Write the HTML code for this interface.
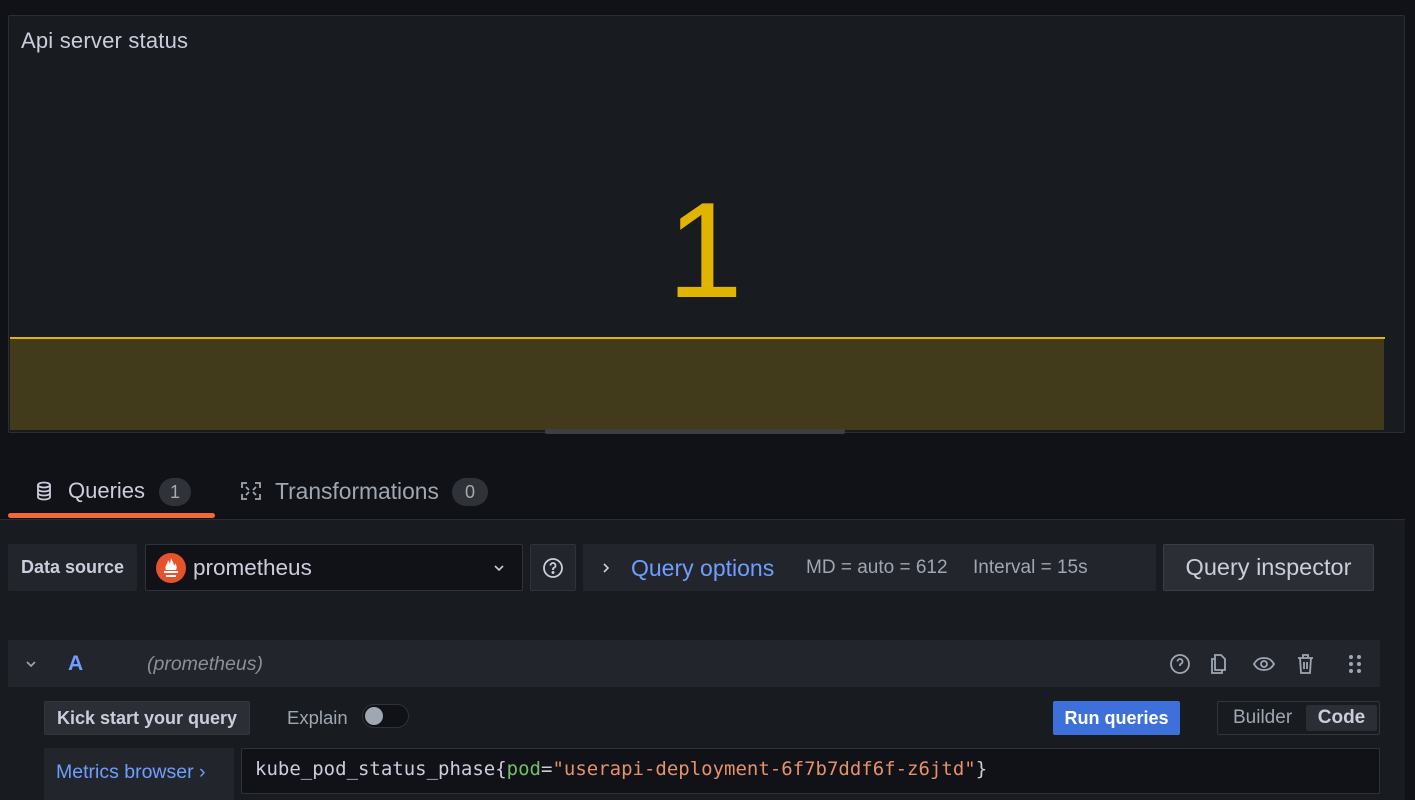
<!DOCTYPE html>
<html><head><style>
*{box-sizing:border-box;margin:0;padding:0}
body{width:1415px;height:800px;overflow:hidden;background:#111217;font-family:"Liberation Sans",sans-serif;color:#ccccdc;position:relative}
.a{position:absolute}
.btn{position:absolute;display:flex;align-items:center;justify-content:center;border-radius:2px}
</style></head><body>
<div class="a" style="left:8px;top:15px;width:1397px;height:418px;background:#181b1f;border:1px solid #2a2d33;border-radius:2px"></div>
<div class="a" style="left:21px;top:28px;font-size:22px;color:#ccccdc;letter-spacing:0.2px">Api server status</div>
<div class="a" style="left:655px;top:180px;width:100px;text-align:center;font-size:136px;color:#e0b400;line-height:140px">1</div>
<div class="a" style="left:10px;top:339px;width:1374px;height:91px;background:#413a1b"></div>
<div class="a" style="left:10px;top:337px;width:1375px;height:2px;background:#e0b400"></div>
<div class="a" style="left:545px;top:429px;width:300px;height:5px;background:#3d3f45;border-radius:2px"></div>

<div class="a" style="left:0;top:519px;width:1405px;height:281px;background:#181b1f;border-top:1px solid #2a2d33"></div>
<svg class="a" style="left:35px;top:481px" width="18" height="20" viewBox="0 0 18 20" fill="none" stroke="#ccccdc" stroke-width="1.8"><ellipse cx="9" cy="4" rx="6" ry="2.5"/><path d="M3 4v12c0 1.4 2.7 2.5 6 2.5s6-1.1 6-2.5V4M3 8c0 1.4 2.7 2.5 6 2.5S15 9.4 15 8M3 12c0 1.4 2.7 2.5 6 2.5s6-1.1 6-2.5"/></svg>
<div class="a" style="left:68px;top:478px;font-size:22px;color:#ccccdc">Queries</div>
<div class="a" style="left:159px;top:478px;width:32px;height:28px;border-radius:14px;background:#2f3238;font-size:18px;text-align:center;line-height:28px;color:#aaa">1</div>
<div class="a" style="left:8px;top:513px;width:207px;height:5px;background:#f06a36;border-radius:3px"></div>
<svg class="a" style="left:240px;top:481px" width="22" height="20" viewBox="0 0 22 20" fill="none" stroke="#9fa7b3" stroke-width="1.8"><path d="M2 7V2h5M20 7V2h-5M2 13v5h5M20 13v5h-5M6 6l3 3M16 6l-3 3M6 14l3-3M16 14l-3-3"/></svg>
<div class="a" style="left:275px;top:478px;font-size:22.8px;color:#9fa7b3">Transformations</div>
<div class="a" style="left:452px;top:478px;width:36px;height:28px;border-radius:14px;background:#2f3238;font-size:18px;text-align:center;line-height:28px;color:#aaa">0</div>

<div class="btn" style="left:8px;top:544px;width:129px;height:47px;background:#22252b;font-size:18px;font-weight:bold;color:#ccccdc">Data source</div>
<div class="a" style="left:145px;top:544px;width:378px;height:47px;background:#111217;border:1px solid #2f3238;border-radius:2px"></div>
<svg class="a" style="left:156px;top:553px" width="30" height="30" viewBox="0 0 30 30"><circle cx="15" cy="15" r="15" fill="#e6522c"/><path d="M8 18h14v2H8zM10 22h10v2H10zM10 17c-2-4 2-6 2-10 1 2 2 3 2 5 0-3 1-5 1-7 1 3 3 5 3 8 1-1 1-2 1-3 2 3 2 5 1 7z" fill="#fff"/></svg>
<div class="a" style="left:193px;top:555px;font-size:22.5px;color:#ccccdc">prometheus</div>
<svg class="a" style="left:493px;top:563px" width="12" height="10" viewBox="0 0 12 10" fill="none" stroke="#ccccdc" stroke-width="1.6"><path d="M2 3l4 4 4-4"/></svg>
<div class="btn" style="left:530px;top:544px;width:46px;height:47px;background:#22252b;border:1px solid #2f3238"><svg width="22" height="22" viewBox="0 0 22 22" fill="none" stroke="#ccccdc" stroke-width="1.8"><circle cx="11" cy="11" r="9"/><path d="M8.5 8.5a2.5 2.5 0 1 1 3.5 2.3c-.7.3-1 .8-1 1.5v.7"/><circle cx="11" cy="15.5" r=".6" fill="#ccccdc"/></svg></div>
<div class="a" style="left:583px;top:544px;width:573px;height:47px;background:#22252b"></div>
<svg class="a" style="left:601px;top:562px" width="10" height="12" viewBox="0 0 10 12" fill="none" stroke="#ccccdc" stroke-width="1.6"><path d="M3 2l4 4-4 4"/></svg>
<div class="a" style="left:631px;top:555px;font-size:23px;color:#6e9fff">Query options</div>
<div class="a" style="left:806px;top:557px;font-size:19px;color:#9fa7b3">MD = auto = 612</div>
<div class="a" style="left:973px;top:557px;font-size:19px;color:#9fa7b3">Interval = 15s</div>
<div class="btn" style="left:1163px;top:544px;width:211px;height:47px;background:#2b2e34;border:1px solid #3a3d43;font-size:23.5px;color:#ccccdc">Query inspector</div>

<div class="a" style="left:8px;top:640px;width:1372px;height:47px;background:#22252b"></div>
<svg class="a" style="left:25px;top:659px" width="12" height="10" viewBox="0 0 12 10" fill="none" stroke="#9fa7b3" stroke-width="1.6"><path d="M2 3l4 4 4-4"/></svg>
<div class="a" style="left:68px;top:652px;font-size:21px;color:#6e9fff;font-weight:bold">A</div>
<div class="a" style="left:147px;top:653px;font-size:19.5px;color:#8e8e99;font-style:italic">(prometheus)</div>
<svg class="a" style="left:1168px;top:653px" width="196" height="22" viewBox="0 0 196 22" fill="none" stroke="#9fa7b3" stroke-width="1.8"><circle cx="12" cy="11" r="9"/><path d="M9.5 8.5a2.5 2.5 0 1 1 3.5 2.3c-.7.3-1 .8-1 1.5v.7"/><path d="M47 6h-3v14h10v-3M47 2h6l4 4v11H47z"/><path d="M86 11c3-5 6-6 10-6s7 1 10 6c-3 5-6 6-10 6s-7-1-10-6z"/><circle cx="96" cy="11" r="3"/><path d="M130 5h15M135 5V2h5v3M132 5l1 15h9l1-15M136 9v7M139 9v7"/><g fill="#9fa7b3" stroke="none"><circle cx="183" cy="4" r="2"/><circle cx="191" cy="4" r="2"/><circle cx="183" cy="11" r="2"/><circle cx="191" cy="11" r="2"/><circle cx="183" cy="18" r="2"/><circle cx="191" cy="18" r="2"/></g></svg>

<div class="btn" style="left:44px;top:701px;width:206px;height:34px;background:#2b2e34;border:1px solid #33363c;font-size:18px;font-weight:bold;color:#ccccdc">Kick start your query</div>
<div class="a" style="left:287px;top:707px;font-size:18.5px;color:#9fa7b3">Explain</div>
<div class="a" style="left:362px;top:704px;width:47px;height:24px;border-radius:12px;background:#111217;border:1px solid #2f3238"></div>
<div class="a" style="left:365px;top:707px;width:18px;height:18px;border-radius:9px;background:#9fa7b3"></div>
<div class="btn" style="left:1053px;top:701px;width:127px;height:34px;background:#3d71d9;font-size:18px;font-weight:bold;color:#fff">Run queries</div>
<div class="a" style="left:1217px;top:701px;width:163px;height:34px;border:1px solid #33363c;border-radius:2px"></div>
<div class="a" style="left:1233px;top:707px;font-size:19px;color:#9fa7b3">Builder</div>
<div class="btn" style="left:1306px;top:705px;width:71px;height:26px;background:#2b2e34;font-size:19px;font-weight:bold;color:#ccccdc">Code</div>

<div class="a" style="left:44px;top:748px;width:190px;height:52px;background:#22252b"></div>
<div class="a" style="left:56px;top:761px;font-size:19.5px;color:#6e9fff">Metrics browser ›</div>
<div class="a" style="left:241px;top:748px;width:1139px;height:46px;background:#111217;border:1px solid #2f3238;border-radius:2px"></div>
<div class="a" style="left:255px;top:758px;font-family:'DejaVu Sans Mono','Liberation Mono',monospace;font-size:19px;color:#ccccdc;white-space:pre">kube_pod_status_phase{<span style="color:#73bf69">pod</span>=<span style="color:#e5916b">"userapi-deployment-6f7b7ddf6f-z6jtd"</span>}</div>
</body></html>
